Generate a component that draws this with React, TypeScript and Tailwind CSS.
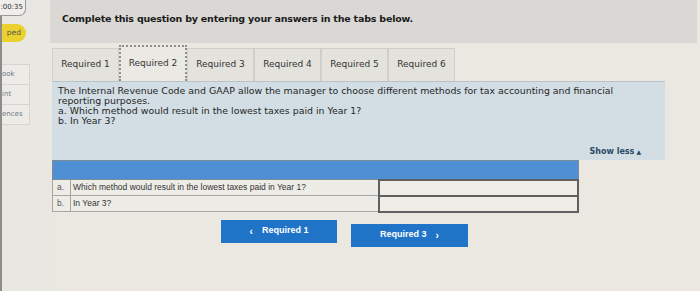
import React from 'react';

const tabs = ['Required 1', 'Required 2', 'Required 3', 'Required 4', 'Required 5', 'Required 6'];

const Sidebar: React.FC = () => (
  <aside className="w-[50px] shrink-0 border-l-2 border-[#8d8c88] bg-[#e9e7e2] flex flex-col">
    <div className="w-[26px] h-[16px] -ml-[2px] rounded-br-[7px] border border-[#9a9996] border-t-0 border-l-0 bg-[#efeeea] flex items-center justify-end pr-[2px] text-[7px] text-[#333]">
      :00:35
    </div>
    <div className="mt-[8px] w-[24px] h-[18px] rounded-r-[9px] bg-[#ecd12e] flex items-center justify-end pr-[5px] text-[7.5px] text-[#555]">
      ped
    </div>
    <div className="mt-[22px] w-[28px] flex flex-col">
      {['ook', 'int', 'ences'].map((t) => (
        <div
          key={t}
          className="h-[21px] border border-[#d6d4cf] border-l-0 -mt-px first:mt-0 bg-[#ecebe7] flex items-center text-[7px] text-[#6d7a86] overflow-hidden whitespace-nowrap"
        >
          {t}
        </div>
      ))}
    </div>
  </aside>
);

export default function App() {
  return (
    <div className="w-[700px] h-[291px] flex bg-[#ebe8e1] overflow-hidden font-['DejaVu_Sans',sans-serif]">
      <Sidebar />
      <main className="flex-1 flex flex-col pr-[3px]">
        <div className="h-[43px] bg-[#d9d8d4] pl-[12px] pt-[12px] text-[9.5px] font-bold text-[#1b1b1b] tracking-[-0.2px]">
          Complete this question by entering your answers in the tabs below.
        </div>

        <div className="flex pl-[2px] mt-[1px] h-[37px] items-end">
          {tabs.map((t, i) => (
            <div
              key={t}
              className={
                i === 1
                  ? 'w-[68px] h-[36px] border-2 border-dotted border-[#8f8f8f] border-b-0 bg-[#ebe9e4] flex items-center justify-center text-[9px] text-[#333]'
                  : 'w-[67px] h-[33px] border border-[#d0cec9] border-b-0 bg-[#e4e2dd] flex items-center justify-center text-[9px] text-[#333]'
              }
            >
              {t}
            </div>
          ))}
        </div>

        <section className="ml-[2px] w-[613px] bg-[#d2dee4] border-t border-[#b7c4cb] px-[6px] pt-[4px] pb-[3px] text-[9.4px] leading-[10px] text-[#262626]">
          <p>
            The Internal Revenue Code and GAAP allow the manager to choose different methods for tax accounting and financial
            reporting purposes.
          </p>
          <p>a. Which method would result in the lowest taxes paid in Year 1?</p>
          <p>b. In Year 3?</p>
          <div className="flex justify-end items-center gap-[2px] pr-[18px] mt-[21px] text-[8px] font-bold text-[#2c4a66]">
            Show less
            <span className="text-[6px]">▲</span>
          </div>
        </section>

        <table className="ml-[2px] w-[527px] border-collapse font-['Liberation_Sans',sans-serif] text-[8.5px] text-[#333]">
          <tbody>
            <tr className="h-[19px] bg-[#4f8fd4]">
              <td colSpan={3} className="border border-[#7d8b98]" />
            </tr>
            <tr className="h-[16px] bg-[#eeece7]">
              <td className="w-[18px] border border-[#a5a5a5] pl-[4px] text-[#555]">a.</td>
              <td className="w-[308px] border border-[#a5a5a5] pl-[2px]">Which method would result in the lowest taxes paid in Year 1?</td>
              <td className="border-2 border-[#5f5f5f] bg-[#efede8]" />
            </tr>
            <tr className="h-[16px] bg-[#eeece7]">
              <td className="border border-[#a5a5a5] pl-[4px] text-[#555]">b.</td>
              <td className="border border-[#a5a5a5] pl-[2px]">In Year 3?</td>
              <td className="border-2 border-[#5f5f5f] bg-[#efede8]" />
            </tr>
          </tbody>
        </table>

        <div className="flex gap-[14px] ml-[171px] mt-[7px] font-['Liberation_Sans',sans-serif]">
          <button className="w-[116px] h-[23px] bg-[#1f74c7] text-white text-[9px] font-bold flex items-center justify-center gap-[9px]">
            <span className="text-[10px]">‹</span>
            Required 1
          </button>
          <button className="w-[117px] h-[23px] mt-[4px] bg-[#1f74c7] text-white text-[9px] font-bold flex items-center justify-center gap-[9px]">
            Required 3
            <span className="text-[10px]">›</span>
          </button>
        </div>
      </main>
    </div>
  );
}
